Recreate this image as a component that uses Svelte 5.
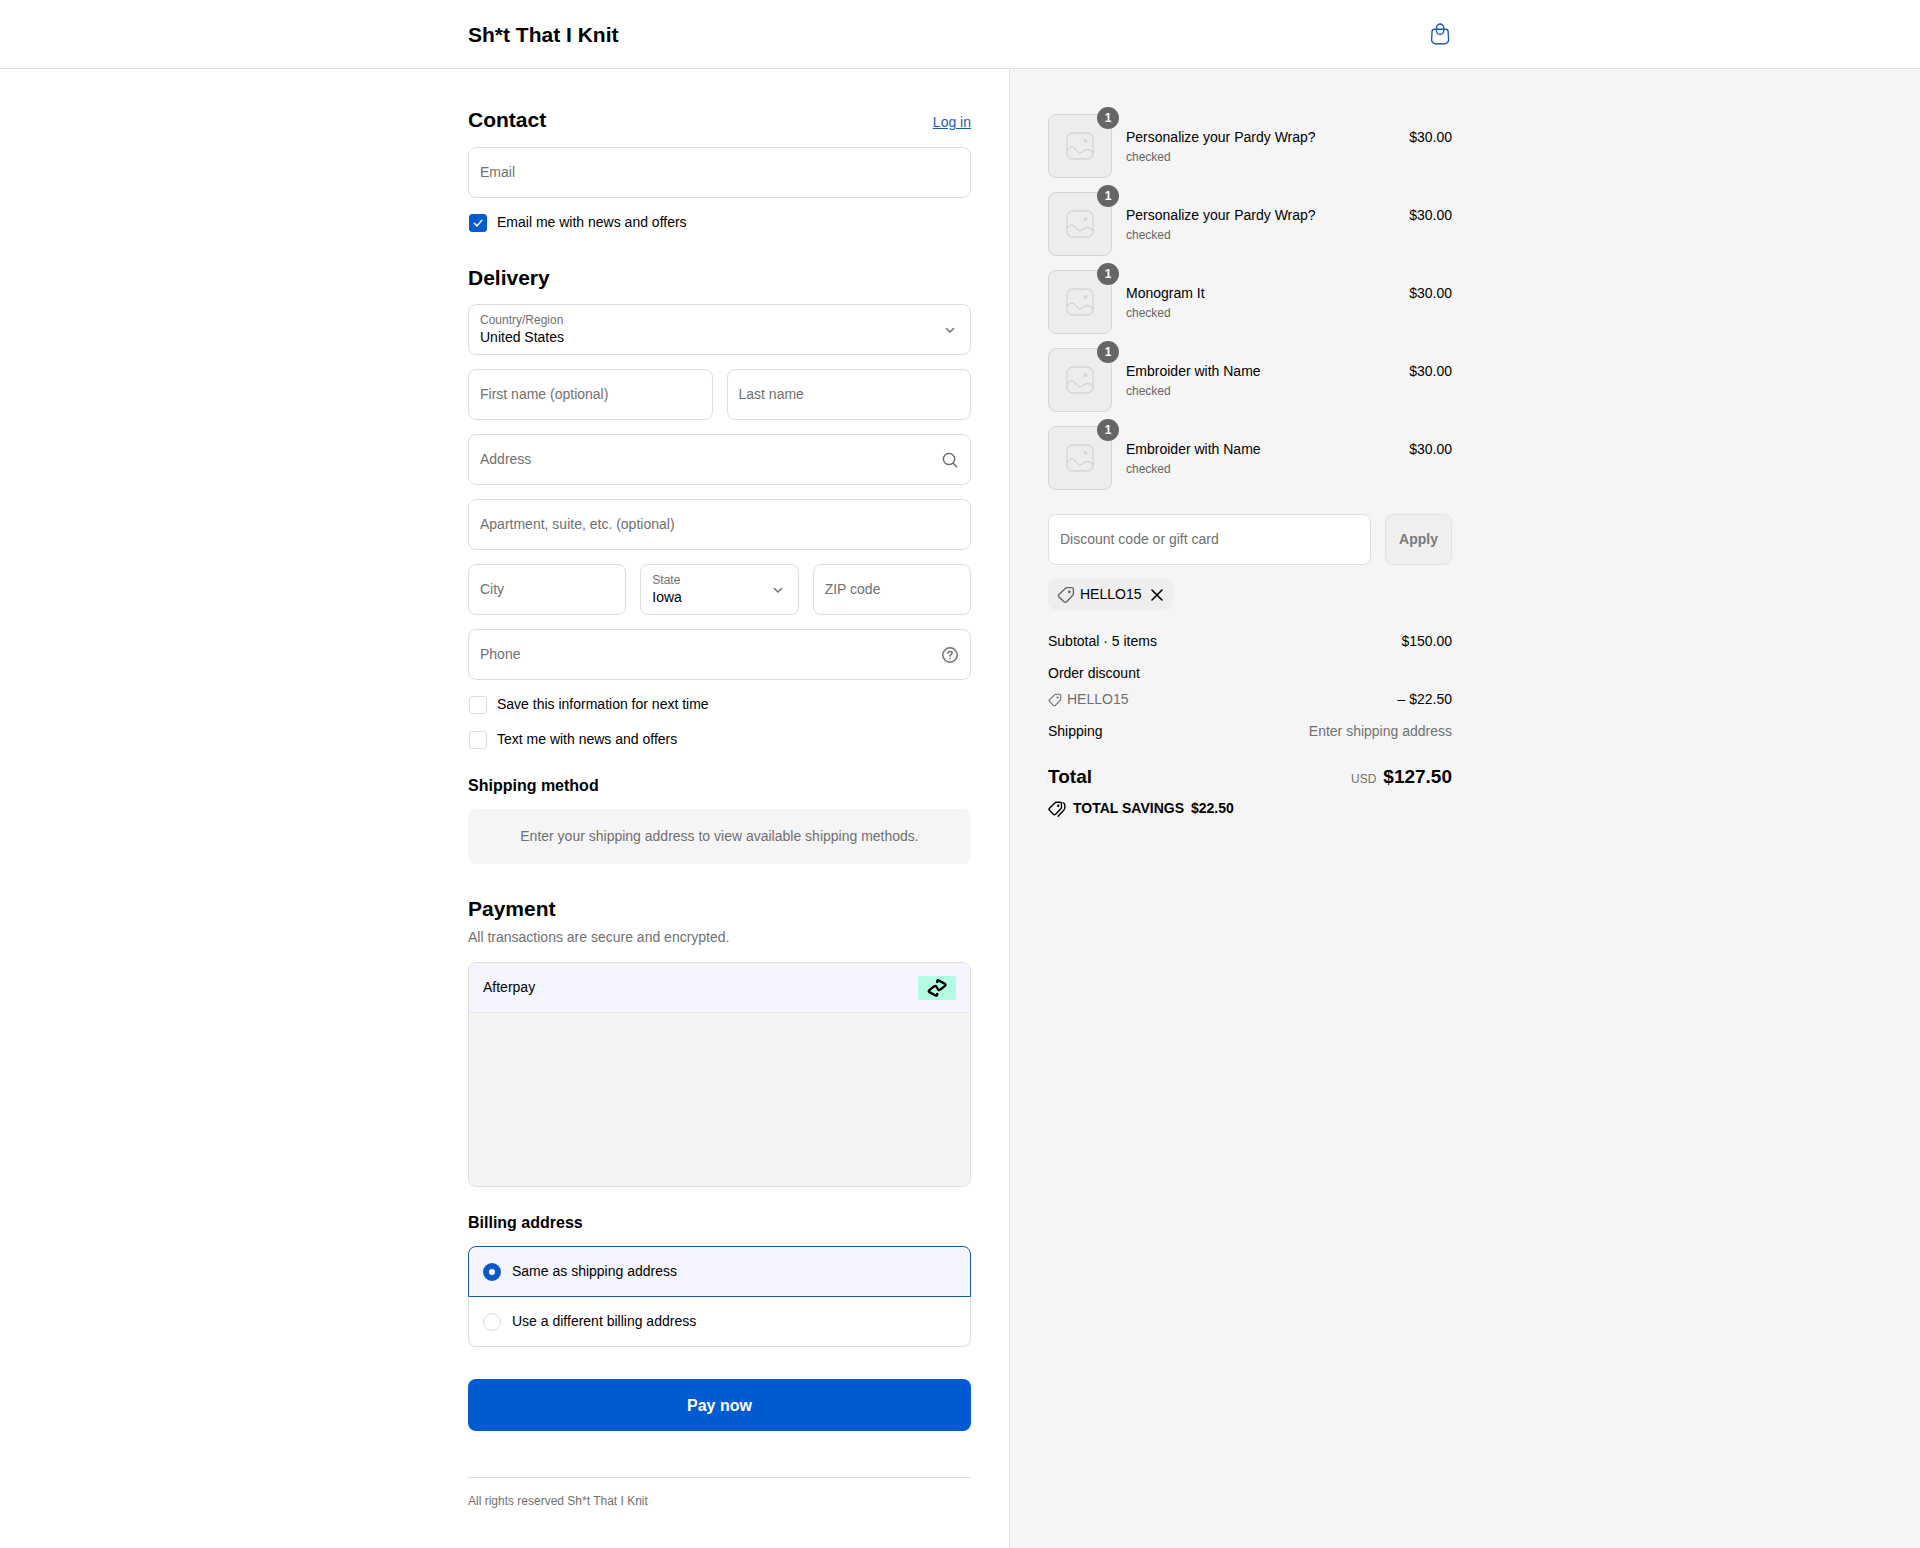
<script lang="ts">
  // Cart
  const items = [
    { id: 1, name: 'Personalize your Pardy Wrap?', option: 'checked', quantity: 1, price: 30 },
    { id: 2, name: 'Personalize your Pardy Wrap?', option: 'checked', quantity: 1, price: 30 },
    { id: 3, name: 'Monogram It', option: 'checked', quantity: 1, price: 30 },
    { id: 4, name: 'Embroider with Name', option: 'checked', quantity: 1, price: 30 },
    { id: 5, name: 'Embroider with Name', option: 'checked', quantity: 1, price: 30 },
  ]
  const money = (value: number) => `$${value.toFixed(2)}`
  const subtotal = items.reduce((sum, i) => sum + i.price * i.quantity, 0)

  // Discount
  let code = $state('')
  let applied = $state('HELLO15')
  let savings = $derived(applied ? subtotal * 0.15 : 0)
  const handleApply = (event: Event) => {
    event.preventDefault()
    applied = code
    code = ''
  }

  // Form
  let news = $state(true)
  let save = $state(false)
  let sms = $state(false)
  let country = $state('United States')
  let region = $state('Iowa')
  let billing = $state('same')
</script>

{#snippet chevron()}
  <svg class="field-icon" viewBox="0 0 18 18" aria-hidden="true">
    <path d="m5.5 7.5 3.5 3.5 3.5-3.5" />
  </svg>
{/snippet}

{#snippet tag(size)}
  <svg class="icon" width={size} height={size} viewBox="0 0 18 18" aria-hidden="true">
    <path d="M10.3 1.6h4.4a1.7 1.7 0 0 1 1.7 1.7v4.4c0 .6-.2 1.1-.6 1.5l-6.2 6.6a1.8 1.8 0 0 1-2.6 0L2 10.9a1.8 1.8 0 0 1 0-2.5L8.8 2.1c.4-.3.9-.5 1.5-.5Z" />
    <circle class="dot" cx="12.3" cy="5.8" r="1.4" />
  </svg>
{/snippet}

<header class="header">
  <div class="header-inner">
    <h1 class="brand">Sh*t That I Knit</h1>
    <a class="cart" href="#cart" aria-label="Cart">
      <svg width="22" height="22" viewBox="0 0 22 22" aria-hidden="true">
        <path d="M4.4 6.3h11.4a2.3 2.3 0 0 1 2.3 2.2l.5 8a4 4 0 0 1-4 4.2h-9a4 4 0 0 1-4-4.2l.5-8a2.3 2.3 0 0 1 2.3-2.2Z" />
        <rect x="6.5" y="1" width="7.2" height="10.4" rx="3.6" />
      </svg>
    </a>
  </div>
</header>

<div class="page">
  <main class="main">
    <div class="main-inner">
      <section>
        <div class="heading-row">
          <h2>Contact</h2>
          <a href="#login">Log in</a>
        </div>
        <div class="stack">
          <div class="field"><input type="email" placeholder="Email" aria-label="Email" /></div>
          <label class="check"><input type="checkbox" bind:checked={news} />Email me with news and offers</label>
        </div>
      </section>

      <section>
        <h2>Delivery</h2>
        <div class="stack">
          <div class="field">
            <label for="country">Country/Region</label>
            <select id="country" bind:value={country}>
              <option>United States</option>
            </select>
            {@render chevron()}
          </div>
          <div class="row">
            <div class="field"><input placeholder="First name (optional)" aria-label="First name (optional)" /></div>
            <div class="field"><input placeholder="Last name" aria-label="Last name" /></div>
          </div>
          <div class="field">
            <input placeholder="Address" aria-label="Address" />
            <svg class="field-icon" viewBox="0 0 18 18" aria-hidden="true">
              <circle cx="8" cy="8" r="5.6" />
              <path d="m12.1 12.1 3.6 3.6" />
            </svg>
          </div>
          <div class="field">
            <input placeholder="Apartment, suite, etc. (optional)" aria-label="Apartment, suite, etc. (optional)" />
          </div>
          <div class="row">
            <div class="field"><input placeholder="City" aria-label="City" /></div>
            <div class="field">
              <label for="region">State</label>
              <select id="region" bind:value={region}>
                <option>Iowa</option>
              </select>
              {@render chevron()}
            </div>
            <div class="field"><input placeholder="ZIP code" aria-label="ZIP code" /></div>
          </div>
          <div class="field">
            <input type="tel" placeholder="Phone" aria-label="Phone" />
            <svg class="field-icon" viewBox="0 0 18 18" aria-hidden="true">
              <circle cx="9" cy="9" r="7.2" />
              <path d="M6.9 7.3c.1-1.2 1-1.9 2.1-1.9s2.1.7 2.1 1.8c0 1.5-2.1 1.5-2.1 3" />
              <circle class="dot" cx="9" cy="12.6" r="0.9" />
            </svg>
          </div>
          <label class="check"><input type="checkbox" bind:checked={save} />Save this information for next time</label>
          <label class="check"><input type="checkbox" bind:checked={sms} />Text me with news and offers</label>
        </div>

        <h3>Shipping method</h3>
        <p class="notice">Enter your shipping address to view available shipping methods.</p>
      </section>

      <section>
        <h2 class="with-note">Payment</h2>
        <p class="note">All transactions are secure and encrypted.</p>
        <div class="payment">
          <div class="payment-head">
            <span>Afterpay</span>
            <svg class="afterpay" width="38" height="24" viewBox="0 0 38 24" role="img" aria-label="Afterpay">
              <rect width="38" height="24" rx="2" />
              <path d="M19.2 6V5.2q.3-1.3 1.6-.7L27 7.900q1.300.9 0 2L22.300 13.600q-1.300.9-2.200-.2L18.300 10.600q-.9-1.100-2.200-.2L11.400 14.100q-1.300 1.100 0 2L17.600 19.500q1.300.6 1.600-.7V18" />
            </svg>
          </div>
          <div class="payment-body"></div>
        </div>

        <h3>Billing address</h3>
        <div class="options">
          <label class="option" class:selected={billing === 'same'}>
            <input type="radio" name="billing" value="same" bind:group={billing} />Same as shipping address
          </label>
          <label class="option" class:selected={billing === 'different'}>
            <input type="radio" name="billing" value="different" bind:group={billing} />Use a different billing address
          </label>
        </div>
      </section>

      <button class="pay" type="submit">Pay now</button>

      <footer class="footer">All rights reserved Sh*t That I Knit</footer>
    </div>
  </main>

  <aside class="summary">
    <div class="summary-inner">
      <ul class="items">
        {#each items as item (item.id)}
          <li class="item">
            <div class="thumb">
              <svg width="28" height="28" viewBox="0 0 28 28" aria-hidden="true">
                <rect x="1" y="1" width="26" height="26" rx="6" />
                <path d="M1 18.5C4 14.6 6 14 8.500 16.500c2.200 2.200 3.500 4.400 6 4.200 2.700-.2 3.300-3.200 6.700-3.200 2.600 0 4.300 1.200 5.600 3.200" />
                <circle class="dot" cx="19.5" cy="9" r="2" />
              </svg>
              <span class="badge">{item.quantity}</span>
            </div>
            <div class="item-text">
              <div class="line"><span>{item.name}</span><span>{money(item.price)}</span></div>
              <div class="small">{item.option}</div>
            </div>
          </li>
        {/each}
      </ul>

      <form class="discount" onsubmit={handleApply}>
        <div class="field">
          <input bind:value={code} placeholder="Discount code or gift card" aria-label="Discount code or gift card" />
        </div>
        <button class="apply" disabled={!code}>Apply</button>
      </form>

      {#if applied}
        <div class="chip">
          {@render tag(18)}
          <span>{applied}</span>
          <button class="remove" aria-label="Remove" onclick={() => (applied = '')}>
            <svg width="12" height="12" viewBox="0 0 12 12" aria-hidden="true"><path d="m1 1 10 10M11 1 1 11" /></svg>
          </button>
        </div>
      {/if}

      <div class="totals">
        <div class="line"><span>Subtotal · {items.length} items</span><span>{money(subtotal)}</span></div>
        {#if applied}
          <div class="order-discount">
            <div class="line">Order discount</div>
            <div class="line">
              <span class="code">{@render tag(14)}{applied}</span>
              <span>– {money(savings)}</span>
            </div>
          </div>
        {/if}
        <div class="line"><span>Shipping</span><span class="muted">Enter shipping address</span></div>
      </div>

      <div class="total">
        <strong>Total</strong>
        <span><span class="currency">USD</span><strong>{money(subtotal - savings)}</strong></span>
      </div>
      {#if applied}
        <div class="savings">
          <svg width="18" height="18" viewBox="0 0 18 18" aria-hidden="true">
            <path d="M8.3 2.2h3.6a1.6 1.6 0 0 1 1.6 1.6v3.5c0 .5-.2.9-.5 1.2l-5.4 5.7a1.5 1.5 0 0 1-2.2 0l-3.9-3.9a1.5 1.5 0 0 1 0-2.1l5.6-5.5c.3-.3.7-.5 1.2-.5Z" />
            <path d="M15.3 2.8c.9.4 1.5 1 1.5 2v2.6c0 1.3-.3 2-1.1 2.9l-5.6 5.9" />
            <circle class="dot" cx="10.2" cy="5.7" r="1.2" />
          </svg>
          <span>TOTAL SAVINGS</span>
          <span>{money(savings)}</span>
        </div>
      {/if}
    </div>
  </aside>
</div>

<style>
  /* Base */
  :global(body) {
    background: #fff;
    color: #000;
    font-family: "Liberation Sans", Arial, sans-serif;
    font-size: 14px;
    line-height: 21px;
  }
  * {
    box-sizing: border-box;
  }
  h1, h2, h3, p, ul {
    margin: 0;
    padding: 0;
  }
  a {
    color: #1a5bb5;
  }
  svg {
    flex: none;
    fill: none;
    stroke: currentColor;
    stroke-width: 1.4;
    stroke-linecap: round;
    stroke-linejoin: round;
  }
  .dot {
    fill: currentColor;
    stroke: none;
  }
  input, select, button {
    font: inherit;
    color: inherit;
  }

  /* Header */
  .header {
    border-bottom: 1px solid #dedede;
  }
  .header-inner {
    display: flex;
    align-items: center;
    justify-content: space-between;
    max-width: 1060px;
    height: 68px;
    margin: 0 auto;
    padding: 0 38px;
  }
  .brand {
    font-size: 21px;
    line-height: 25px;
  }
  .cart {
    display: flex;
  }

  /* Columns */
  .page {
    display: grid;
    grid-template-columns: calc(50% + 49px) minmax(0, 1fr);
    min-height: calc(100vh - 69px);
  }
  .main {
    display: flex;
    justify-content: flex-end;
  }
  .main-inner {
    width: 100%;
    max-width: 579px;
    padding: 38px;
  }
  .summary {
    border-left: 1px solid #dedede;
    background: #f5f5f5;
  }
  .summary-inner {
    max-width: 480px;
    padding: 45px 38px 38px;
  }

  /* Headings */
  section {
    margin-bottom: 32px;
  }
  h2 {
    margin-bottom: 14px;
    font-size: 21px;
    line-height: 25px;
  }
  h3 {
    margin: 26px 0 14px;
    font-size: 16px;
    line-height: 19px;
  }
  .heading-row {
    display: flex;
    align-items: baseline;
    justify-content: space-between;
    min-height: 40px;
  }
  h2.with-note {
    margin-bottom: 6px;
  }
  .note {
    margin-bottom: 14px;
    color: #707070;
  }

  /* Fields */
  .stack {
    display: grid;
    gap: 14px;
  }
  .row {
    display: grid;
    grid-auto-flow: column;
    grid-auto-columns: minmax(0, 1fr);
    gap: 14px;
  }
  .field {
    position: relative;
    flex: 1;
    min-width: 0;
  }
  .field input, .field select {
    display: block;
    width: 100%;
    height: 51px;
    padding: 0 11px 2px;
    border: 1px solid #dedede;
    border-radius: 8px;
    background: #fff;
    appearance: none;
  }
  .field select {
    padding: 16px 11px 0;
  }
  .field input::placeholder {
    color: #707070;
    opacity: 1;
  }
  .field label {
    position: absolute;
    top: 7px;
    left: 12px;
    color: #707070;
    font-size: 12px;
    line-height: 18px;
  }
  .field-icon {
    position: absolute;
    top: 17px;
    right: 12px;
    width: 18px;
    height: 18px;
    color: #707070;
    stroke-width: 1.5;
    pointer-events: none;
  }
  .check {
    display: flex;
    align-items: center;
    gap: 10px;
    padding-left: 1px;
  }
  .check input, .option input {
    flex: none;
    width: 18px;
    height: 18px;
    margin: 0;
    border: 1px solid #dedede;
    background: #fff;
    appearance: none;
  }
  .check input {
    border-radius: 3px;
  }
  .check input:checked {
    border-color: #005bd1;
    background: #005bd1 url("data:image/svg+xml,%3Csvg xmlns='http://www.w3.org/2000/svg' viewBox='0 0 16 16' fill='none' stroke='white' stroke-width='1.5' stroke-linecap='round' stroke-linejoin='round'%3E%3Cpath d='m4.3 8.3 2.6 2.6 5-5.6'/%3E%3C/svg%3E");
  }
  .notice {
    padding: 17px;
    border-radius: 8px;
    background: #f5f5f5;
    color: #707070;
    text-align: center;
  }

  /* Payment */
  .payment {
    overflow: hidden;
    border: 1px solid #dedede;
    border-radius: 8px;
  }
  .payment-head {
    display: flex;
    align-items: center;
    justify-content: space-between;
    height: 50px;
    padding: 0 14px;
    border-bottom: 1px solid #e8e8ea;
    background: #f4f5ff;
  }
  .afterpay {
    color: #000;
    stroke-width: 2.4;
  }
  .afterpay rect {
    fill: #b2fce4;
    stroke: none;
  }
  .payment-body {
    height: 173px;
    background: #f4f4f4;
  }
  .option {
    display: flex;
    align-items: center;
    gap: 11px;
    height: 51px;
    padding: 0 14px;
    border: 1px solid #dedede;
  }
  .option:first-child {
    border-radius: 8px 8px 0 0;
  }
  .option:last-child {
    height: 50px;
    border-top: 0;
    border-radius: 0 0 8px 8px;
  }
  .option.selected {
    border-color: #1a5ba5;
    background: #f4f5ff;
  }
  .option input {
    border-radius: 50%;
  }
  .option input:checked {
    border: 6px solid #0b57c4;
  }
  .pay {
    display: block;
    width: 100%;
    height: 52px;
    border: 0;
    border-radius: 8px;
    background: #005bd1;
    color: #fff;
    font-size: 16px;
    font-weight: 700;
  }
  .footer {
    margin-top: 46px;
    padding-top: 14px;
    border-top: 1px solid #dedede;
    color: #707070;
    font-size: 12px;
    line-height: 18px;
  }

  /* Items */
  .items {
    display: grid;
    gap: 14px;
    margin-bottom: 24px;
    list-style: none;
  }
  .item {
    display: flex;
    align-items: center;
    gap: 14px;
  }
  .thumb {
    position: relative;
    display: grid;
    flex: none;
    place-items: center;
    width: 64px;
    height: 64px;
    border: 1px solid #d6d6d6;
    border-radius: 8px;
    background: #ededed;
    color: #d6d6d6;
  }
  .badge {
    position: absolute;
    top: -8px;
    right: -8px;
    width: 22px;
    height: 22px;
    border-radius: 11px;
    background: #666;
    color: #fff;
    font-size: 12px;
    font-weight: 700;
    line-height: 22px;
    text-align: center;
  }
  .item-text {
    flex: 1;
  }
  .line {
    display: flex;
    justify-content: space-between;
    gap: 14px;
  }
  .small {
    color: #666;
    font-size: 12px;
    line-height: 18px;
  }

  /* Discount */
  .discount {
    display: flex;
    gap: 14px;
    margin-bottom: 14px;
  }
  .apply {
    padding: 0 13px;
    border: 1px solid #e2e2e2;
    border-radius: 8px;
    background: #efefef;
    font-weight: 700;
  }
  .apply:disabled {
    color: #7a7a7a;
  }
  .chip {
    display: inline-flex;
    align-items: center;
    gap: 5px;
    height: 31px;
    padding: 0 10px 0 9px;
    border-radius: 8px;
    background: #eee;
  }
  .chip .icon {
    color: #666;
  }
  .remove {
    display: flex;
    margin-left: 5px;
    padding: 0;
    border: 0;
    background: none;
  }
  .remove svg {
    stroke-width: 1.6;
  }

  /* Totals */
  .totals {
    display: grid;
    gap: 11px;
    margin: 21px 0 23px;
  }
  .order-discount {
    display: grid;
    gap: 5px;
  }
  .muted, .code {
    color: #707070;
  }
  .code {
    display: flex;
    align-items: center;
    gap: 5px;
  }
  .total {
    display: flex;
    align-items: baseline;
    justify-content: space-between;
    font-size: 19px;
    line-height: 23px;
  }
  .currency {
    margin-right: 7px;
    color: #707070;
    font-size: 12px;
    line-height: 12px;
  }
  .savings {
    display: flex;
    align-items: center;
    gap: 7px;
    margin-top: 10px;
    font-weight: 700;
  }

  @media (max-width: 1000px) {
    .page {
      grid-template-columns: minmax(0, 1fr);
    }
    .main {
      justify-content: center;
    }
    .summary {
      border-top: 1px solid #dedede;
      border-left: 0;
    }
    .summary-inner {
      max-width: 579px;
      margin: 0 auto;
    }
  }
</style>
